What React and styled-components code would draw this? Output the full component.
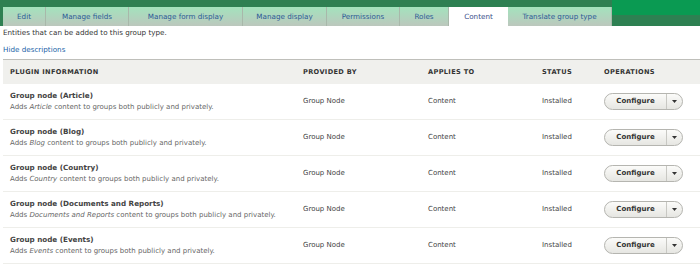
import React from 'react';
import styled, { createGlobalStyle } from 'styled-components';

const GlobalStyle = createGlobalStyle`
  body {
    margin: 0;
    background: #fff;
    font-family: "DejaVu Sans", Verdana, sans-serif;
    color: #333;
  }
`;

const Header = styled.div`
  background: linear-gradient(#0a9a52 0, #0a9a52 15px, #2e8052 15px);
  height: 26px;
  display: flex;
  align-items: flex-end;
`;

const TabBar = styled.ul`
  list-style: none;
  margin: 0;
  padding: 7px 0 0 3px;
  display: flex;
  align-items: flex-end;
  height: 26px;
  box-sizing: border-box;
  background: #2e8052;
`;

const Tab = styled.li`
  height: ${props => (props.active ? '21px' : '19px')};
  margin-bottom: ${props => (props.active ? '-2px' : '0')};
  width: ${props => props.w}px;
  display: flex;
  align-items: center;
  justify-content: center;
  font-size: 7.2px;
  color: ${props => (props.active ? '#3a4e8a' : '#2b5a96')};
  background: ${props =>
    props.active ? '#fff' : 'linear-gradient(#a3e3bd, #bcc7bd)'};
  border-right: ${props => (props.active ? 'none' : '1px solid #a8b8aa')};
  box-sizing: border-box;
  padding-bottom: ${props => (props.active ? '3px' : '1px')};
`;

const Page = styled.div`
  padding: 0 0 0 3px;
`;

const Intro = styled.p`
  margin: 0;
  padding-top: 2px;
  font-size: 7.2px;
  line-height: 10px;
  color: #333;
`;

const Link = styled.a`
  display: block;
  margin-top: 7px;
  font-size: 7.2px;
  line-height: 10px;
  color: #1a5fa8;
  text-decoration: none;
`;

const Table = styled.table`
  margin-top: 4px;
  width: 100%;
  border-collapse: collapse;
  table-layout: fixed;
`;

const Th = styled.th`
  box-sizing: border-box;
  width: ${props => (props.w ? `${props.w}px` : 'auto')};
  background: #f0f0ed;
  border-top: 1px solid #bfbfba;
  height: 24px;
  padding: 0 0 0 7px;
  text-align: left;
  font-size: 6.6px;
  font-weight: bold;
  letter-spacing: 0.35px;
  text-transform: uppercase;
  color: #333;
`;

const Tr = styled.tr`
  border-bottom: 1px solid #eeeeea;
`;

const Td = styled.td`
  height: 35px;
  padding: 0 0 0 7px;
  font-size: 7px;
  color: #444;
  vertical-align: middle;
`;

const Title = styled.div`
  font-weight: bold;
  font-size: 7.2px;
  color: #444;
  line-height: 11px;
`;

const Desc = styled.div`
  margin-top: 1px;
  font-size: 7px;
  color: #666;
  line-height: 11px;
  em {
    font-style: italic;
  }
`;

const Dropbutton = styled.div`
  display: inline-flex;
  align-items: stretch;
  height: 15px;
  border: 1px solid #b5b5b0;
  border-radius: 9px;
  background: linear-gradient(#fbfbf9, #e6e6e2);
  overflow: hidden;
`;

const ButtonMain = styled.span`
  width: 61px;
  display: flex;
  align-items: center;
  justify-content: center;
  font-size: 7px;
  font-weight: bold;
  color: #333;
  border-right: 1px solid #c8c8c3;
`;

const Toggle = styled.span`
  width: 15px;
  display: flex;
  align-items: center;
  justify-content: center;
`;

const rows = ['Article', 'Blog', 'Country', 'Documents and Reports', 'Events'];

const tabs = [
  ['Edit', 43],
  ['Manage fields', 83],
  ['Manage form display', 114],
  ['Manage display', 84],
  ['Permissions', 73],
  ['Roles', 49],
  ['Content', 59],
  ['Translate group type', 104],
];

export default function App() {
  return (
    <>
      <GlobalStyle />
      <Header>
        <TabBar>
          {tabs.map(([label, w]) => (
            <Tab key={label} w={w} active={label === 'Content'}>
              {label}
            </Tab>
          ))}
        </TabBar>
      </Header>
      <Page>
        <Intro>Entities that can be added to this group type.</Intro>
        <Link href="#">Hide descriptions</Link>
        <Table>
          <thead>
            <tr>
              <Th w={293}>Plugin information</Th>
              <Th w={125}>Provided by</Th>
              <Th w={114}>Applies to</Th>
              <Th w={62}>Status</Th>
              <Th>Operations</Th>
            </tr>
          </thead>
          <tbody>
            {rows.map(name => (
              <Tr key={name}>
                <Td>
                  <Title>Group node ({name})</Title>
                  <Desc>
                    Adds <em>{name}</em> content to groups both publicly and privately.
                  </Desc>
                </Td>
                <Td>Group Node</Td>
                <Td>Content</Td>
                <Td>Installed</Td>
                <Td>
                  <Dropbutton>
                    <ButtonMain>Configure</ButtonMain>
                    <Toggle>
                      <svg width="5" height="3" viewBox="0 0 5 3">
                        <path d="M0 0 L5 0 L2.5 3 Z" fill="#333" />
                      </svg>
                    </Toggle>
                  </Dropbutton>
                </Td>
              </Tr>
            ))}
          </tbody>
        </Table>
      </Page>
    </>
  );
}
